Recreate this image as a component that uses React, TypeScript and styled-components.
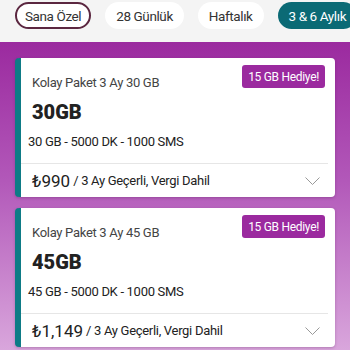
import React from "react";
import styled, { createGlobalStyle } from "styled-components";

const GlobalStyle = createGlobalStyle`
  html, body {
    margin: 0;
    padding: 0;
    width: 350px;
    height: 350px;
    overflow: hidden;
    font-family: Roboto, "Liberation Sans", sans-serif;
    background: #f4f4f4;
  }
`;

const Page = styled.div`
  width: 350px;
  height: 350px;
  display: flex;
  flex-direction: column;
  overflow: hidden;
`;

const TabBar = styled.div`
  display: flex;
  align-items: flex-start;
  gap: 14px;
  height: 42px;
  padding: 2px 0 0 15px;
  box-sizing: border-box;
  background: #f4f4f4;
  white-space: nowrap;
`;

const Tab = styled.div<{ $outlined?: boolean; $active?: boolean }>`
  flex-shrink: 0;
  height: 27px;
  padding: 0 ${(p) => (p.$outlined ? 8 : 9)}px;
  box-sizing: border-box;
  display: flex;
  align-items: center;
  border-radius: 14px;
  font-size: 13.5px;
  letter-spacing: -0.4px;
  color: ${(p) => (p.$active ? "#fff" : "#333")};
  background: ${(p) => (p.$active ? "#0b6a75" : "#fff")};
  border: 2px solid ${(p) => (p.$outlined ? "#5b2740" : "transparent")};
`;

const Band = styled.div`
  flex: 1;
  background: linear-gradient(180deg, #9b2a9f 0%, #b258b9 45%, #d9a6dc 100%);
  padding: 16px 15px 0;
  display: flex;
  flex-direction: column;
  gap: 11px;
`;

const Card = styled.div`
  position: relative;
  background: #fff;
  border-left: 6px solid #0e7b86;
  border-radius: 4px;
  box-shadow: 0 1px 3px rgba(60, 0, 60, 0.25);
  padding: 18px 7px 0 0;
  flex-shrink: 0;
`;

const Badge = styled.div`
  position: absolute;
  top: 7px;
  right: 10px;
  height: 23px;
  padding: 0 6px;
  display: flex;
  align-items: center;
  background: #9b2a9f;
  color: #fff;
  font-size: 12px;
  letter-spacing: -0.3px;
  border-radius: 3px;
`;

const Title = styled.div`
  padding-left: 11px;
  font-size: 13px;
  line-height: 14px;
  letter-spacing: -0.3px;
  color: #444;
`;

const Amount = styled.div`
  padding-left: 11px;
  margin-top: 10px;
  font-size: 20px;
  line-height: 24px;
  font-weight: 900;
  color: #222;
`;

const Specs = styled.div`
  padding-left: 7px;
  margin-top: 9px;
  font-size: 13px;
  line-height: 18px;
  letter-spacing: -0.3px;
  color: #222;
  padding-bottom: 12px;
  border-bottom: 1px solid #e6e6e6;
`;

const PriceRow = styled.div`
  display: flex;
  align-items: center;
  height: 33px;
  padding-left: 11px;
  color: #222;
`;

const Price = styled.span`
  font-size: 17px;
  margin-right: 3px;
`;

const Note = styled.span`
  flex: 1;
  font-size: 13px;
  letter-spacing: -0.3px;
`;

const Chevron = styled.svg`
  width: 15px;
  height: 8px;
  margin-right: 8px;
`;

const packages = [
  { title: "Kolay Paket 3 Ay 30 GB", gb: "30GB", specs: "30 GB - 5000 DK - 1000 SMS", price: "₺990" },
  { title: "Kolay Paket 3 Ay 45 GB", gb: "45GB", specs: "45 GB - 5000 DK - 1000 SMS", price: "₺1,149" },
];

export default function App() {
  return (
    <Page>
      <GlobalStyle />
      <TabBar>
        <Tab $outlined>Sana Özel</Tab>
        <Tab>28 Günlük</Tab>
        <Tab>Haftalık</Tab>
        <Tab $active>3 &amp; 6 Aylık</Tab>
      </TabBar>
      <Band>
        {packages.map((p) => (
          <Card key={p.gb}>
            <Badge>15 GB Hediye!</Badge>
            <Title>{p.title}</Title>
            <Amount>{p.gb}</Amount>
            <Specs>{p.specs}</Specs>
            <PriceRow>
              <Price>{p.price}</Price>
              <Note>/ 3 Ay Geçerli, Vergi Dahil</Note>
              <Chevron viewBox="0 0 15 8">
                <path d="M0.5 0.5 L7.5 7.5 L14.5 0.5" fill="none" stroke="#999" strokeWidth="1" />
              </Chevron>
            </PriceRow>
          </Card>
        ))}
      </Band>
    </Page>
  );
}
